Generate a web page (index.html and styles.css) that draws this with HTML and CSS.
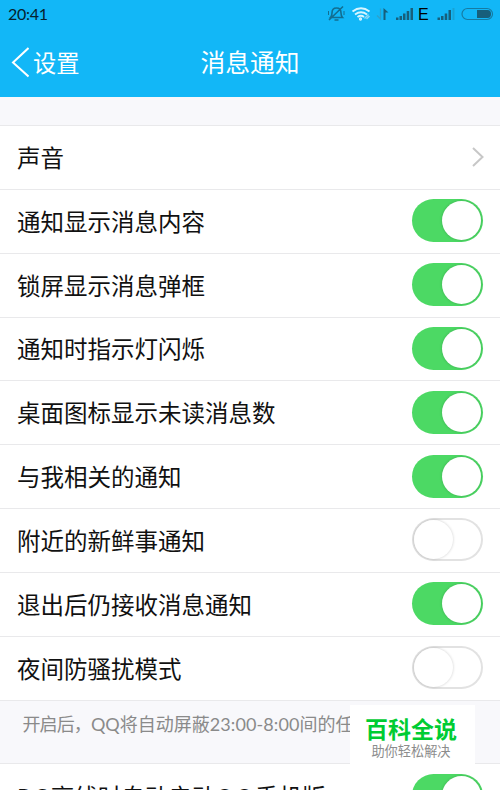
FILE: index.html
```html
<!DOCTYPE html>
<html lang="zh-CN">
<head>
    <meta charset="UTF-8">
    <meta name="viewport" content="width=device-width, initial-scale=1.0">
    <title>消息通知</title>
    <link rel="stylesheet" href="styles.css">
</head>
<body>

    <div class="screen">
        <header class="header">
            <div class="status-bar">
                <span class="time">20:41</span>
                <svg class="status-icons" width="180" height="28" viewBox="0 0 180 28">
                    <!-- muted bell -->
                    <g fill="none" stroke="#126e91" stroke-width="1.6">
                        <path d="M10.500 17.500q1.500-1.500 1.500-4.500 0-5 4.500-5t4.500 5q0 3 1.500 4.500zM14.500 20h4M9 20L23 6.500"/>
                        <path d="M8.500 11v4M24 11v4" stroke-width="1"/>
                    </g>
                    <!-- wifi -->
                    <g fill="none" stroke="#d8f5ff" stroke-width="1.9">
                        <path d="M32.500 11.500q8.500-6.500 17 0M35 14.500q6-4.500 12 0M37.500 17q3.500-2.500 6.500 0"/>
                        <circle cx="40.500" cy="19" r=".7"/>
                    </g>
                    <path d="M44.500 18.500l4-4M46.500 19l3-3" fill="none" stroke="#8bd9f5" stroke-width="1.5"/>
                    <!-- data arrows -->
                    <path d="M60.500 8.500v10.500l-3.500-3.500" fill="none" stroke="#2fa1c9" stroke-width="1.2"/>
                    <path d="M63.500 20V8l5 4.500H65.500V20z" fill="#175f7b"/>
                    <!-- signal 1 -->
                    <path d="M76 17.500h2.500V20H76zM79.500 16H82v4h-2.500zM83 13.500h2.500V20H83zM86.700 11h2.500v9h-2.500zM90.500 8H93v12h-2.500z" fill="#175f7b"/>
                    <!-- signal 2 -->
                    <path d="M117.500 17.500h2.500V20h-2.500zM121 16h2.500v4H121zM124.700 13.500h2.500V20h-2.500zM128.500 10h2.500v10h-2.500z" fill="#175f7b"/>
                    <path d="M132.500 8h2v12h-2z" fill="#18a3d5"/>
                    <!-- battery -->
                    <rect x="142" y="8.500" width="30.500" height="11" rx="5.500" fill="none" stroke="#167ba2" stroke-width="1.2"/>
                    <path d="M157 10h10.500q3.500 0 3.500 4t-3.500 4H157z" fill="#175f7b"/>
                </svg>
                <span class="network">E</span>
            </div>
            <div class="nav">
                <div class="back">
                    <svg width="18" height="32" viewBox="0 0 18 32">
                        <path d="M17.500 2L2 16.500l15.500 14" fill="none" stroke="#fff" stroke-width="2"/>
                    </svg>
                    <span>设置</span>
                </div>
                <h1 class="title">消息通知</h1>
            </div>
        </header>

        <main class="settings">
            <div class="row">
                <span>声音</span>
                <svg class="chevron" width="12" height="20" viewBox="0 0 12 20">
                    <path d="M1 1l9.500 9L1 19" fill="none" stroke="#c7c7c7" stroke-width="2"/>
                </svg>
            </div>
            <div class="row"><span>通知显示消息内容</span><i class="switch on"></i></div>
            <div class="row"><span>锁屏显示消息弹框</span><i class="switch on"></i></div>
            <div class="row"><span>通知时指示灯闪烁</span><i class="switch on"></i></div>
            <div class="row"><span>桌面图标显示未读消息数</span><i class="switch on"></i></div>
            <div class="row"><span>与我相关的通知</span><i class="switch on"></i></div>
            <div class="row"><span>附近的新鲜事通知</span><i class="switch"></i></div>
            <div class="row"><span>退出后仍接收消息通知</span><i class="switch on"></i></div>
            <div class="row"><span>夜间防骚扰模式</span><i class="switch"></i></div>
            <p class="note"><span class="lead">开启后，</span>QQ将自动屏蔽<span class="hours">23:00-8:00</span>间的任</p>
            <div class="row last"><span><span class="pc">PC</span>离线时自动启动<span class="app">QQ</span>手机版</span><i class="switch on"></i></div>
        </main>

        <div class="badge">
            <strong>百科全说</strong>
            <span>助你轻松解决</span>
        </div>
    </div>

</body>
</html>
```
FILE: styles.css
```css
* {
    box-sizing: border-box;
}
body {
    margin: 0;
    font-family: Lato, "Noto Sans CJK SC", sans-serif;
    color: #111;
}
.screen {
    position: relative;
    width: 500px;
    height: 790px;
    overflow: hidden;
    background-color: #f8f8fb;
}
.header {
    height: 97px;
    background-color: #12b7f7;
    color: #fff;
}
.status-bar {
    position: relative;
    display: flex;
    justify-content: space-between;
    height: 28px;
    line-height: 28px;
    padding-left: 8px;
    color: #06222e;
}
.time {
    font-size: 16px;
    letter-spacing: -0.3px;
}
/* network type sits between the two signal meters */
.network {
    position: absolute;
    left: 418px;
    top: 0;
    color: #000;
    font: 16px/29px "Liberation Sans", sans-serif;
}
.nav {
    position: relative;
    display: flex;
    align-items: center;
    justify-content: center;
    height: 69px;
}
.back {
    position: absolute;
    left: 11px;
    top: 18px;
    display: flex;
    align-items: center;
    gap: 4px;
    height: 32px;
    font-size: 23.3px;
    line-height: 32px;
}
.back span {
    margin-top: 2px;
}
.title {
    margin: 0;
    font-size: 24.8px;
    font-weight: 400;
    line-height: 70px;
}
.settings {
    margin-top: 28px;
}
.row {
    display: flex;
    align-items: center;
    justify-content: space-between;
    height: 63.85px;
    padding: 0 17px 0 17px;
    background-color: #fff;
    border-top: 1px solid #e9e9eb;
    font-size: 23.5px;
    line-height: 34px;
    white-space: nowrap;
}
.row > span {
    padding-top: 1px;
}
.row.last > span {
    padding-top: 3px;
}
.pc {
    letter-spacing: 2px;
}
.app {
    letter-spacing: 1px;
}
.chevron {
    margin-right: -1px;
}
.switch {
    display: flex;
    align-items: center;
    width: 71px;
    height: 43px;
    margin-bottom: 1px;
    padding-left: 2px;
    border-radius: 22px;
    box-shadow: inset 0 0 0 2px #e2e2e2;
}
.switch::before {
    content: "";
    width: 39px;
    height: 39px;
    border-radius: 50%;
    background-color: #fff;
    box-shadow: 0 0 3px rgba(0, 0, 0, 0.2);
}
.switch.on {
    justify-content: flex-end;
    padding: 0 2px 0 0;
    background-color: #4cd964;
    box-shadow: none;
}
.note {
    height: 63.85px;
    margin: 0;
    padding: 9px 0 0 22.5px;
    border-top: 1px solid #e9e9eb;
    color: #8a8a8a;
    font-size: 18px;
    line-height: 28px;
    white-space: nowrap;
}
.lead {
    letter-spacing: -0.9px;
}
.hours {
    letter-spacing: 0.1px;
}
.badge {
    position: absolute;
    left: 350px;
    top: 705px;
    display: flex;
    flex-direction: column;
    align-items: center;
    width: 125px;
    height: 67px;
    padding-top: 9px;
    padding-right: 3px;
    background-color: #fff;
}
.badge strong {
    color: #0c3;
    font-size: 23px;
    line-height: 31px;
}
.badge span {
    color: #8c8c8c;
    font-size: 13.2px;
    line-height: 12px;
}
```
